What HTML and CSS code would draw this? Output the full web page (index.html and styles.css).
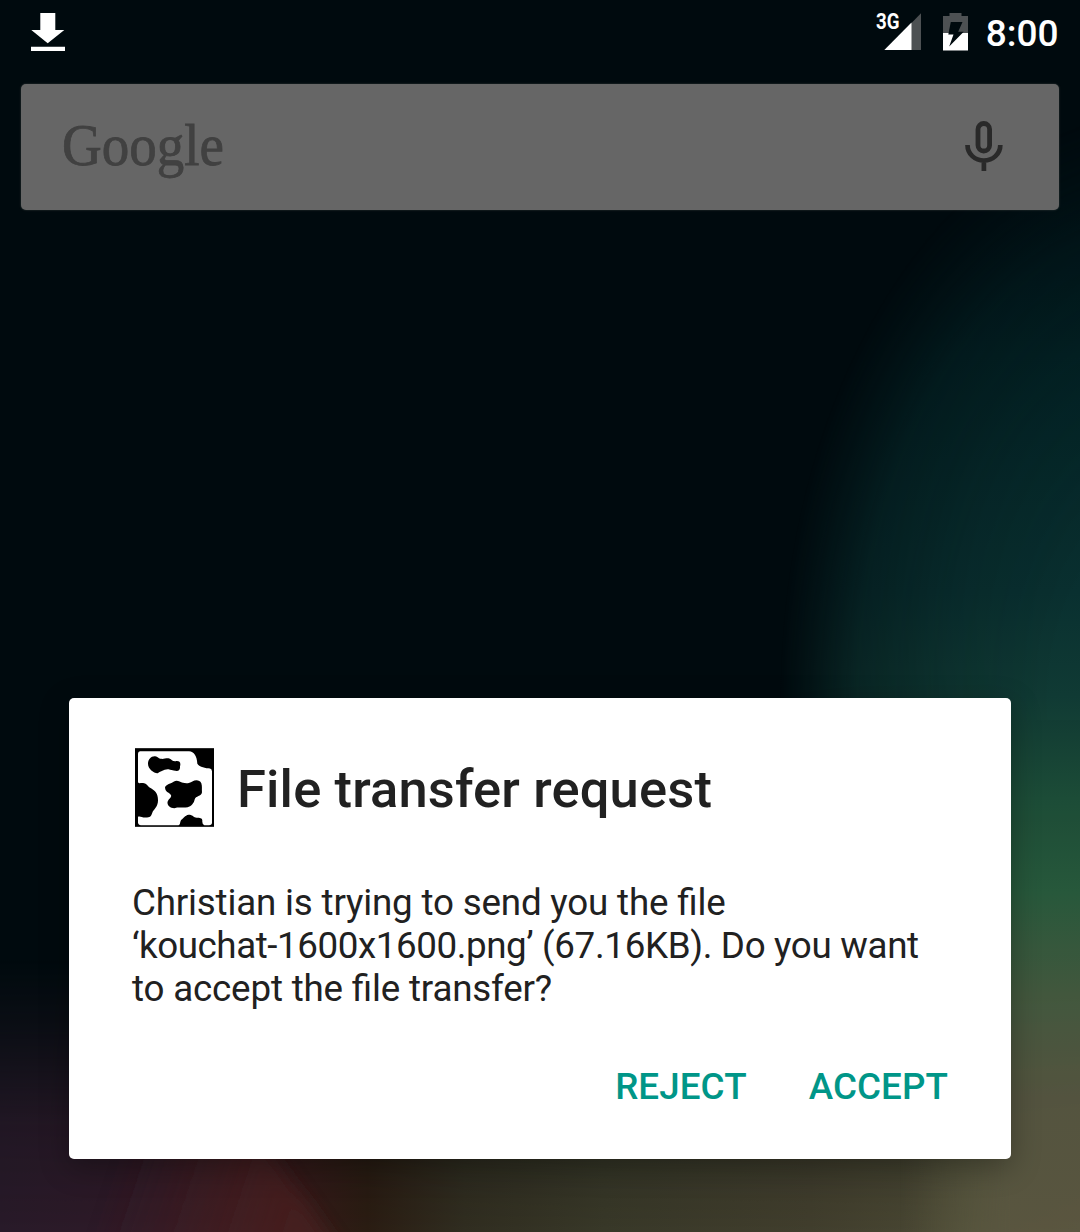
FILE: index.html
```html
<!DOCTYPE html>
<html lang="en">
<head>
<meta charset="utf-8">
<title>File transfer request</title>
<link rel="stylesheet" href="styles.css">
</head>
<body>
<main class="screen">
  <svg class="wallpaper" viewBox="0 0 1080 1232" aria-hidden="true">
    <defs>
      <linearGradient id="green" gradientUnits="userSpaceOnUse" x1="0" y1="200" x2="0" y2="1232">
        <stop offset="0" stop-color="#01181c"/>
        <stop offset=".15" stop-color="#032527"/>
        <stop offset=".38" stop-color="#093030"/>
        <stop offset=".48" stop-color="#103a34"/>
        <stop offset=".58" stop-color="#1d4f39"/>
        <stop offset=".67" stop-color="#295c3e"/>
        <stop offset=".77" stop-color="#455b40"/>
        <stop offset=".87" stop-color="#555540"/>
        <stop offset="1" stop-color="#5a5640"/>
      </linearGradient>
      <radialGradient id="edge" gradientUnits="userSpaceOnUse" cx="0" cy="0" r="1" gradientTransform="translate(1170 700) scale(390 590)">
        <stop offset="0" stop-color="#fff"/>
        <stop offset=".3" stop-color="#fff"/>
        <stop offset=".58" stop-color="#d4d4d4"/>
        <stop offset=".8" stop-color="#999"/>
        <stop offset=".93" stop-color="#333"/>
        <stop offset="1" stop-color="#000"/>
      </radialGradient>
      <linearGradient id="side" gradientUnits="userSpaceOnUse" x1="900" y1="0" x2="1010" y2="0">
        <stop offset="0" stop-color="#000"/>
        <stop offset="1" stop-color="#f4f4f4"/>
      </linearGradient>
      <mask id="edgeMask" maskUnits="userSpaceOnUse" x="0" y="0" width="1080" height="1232">
        <rect width="1080" height="720" fill="url(#edge)"/>
        <rect x="900" y="720" width="180" height="512" fill="url(#side)"/>
      </mask>
      <linearGradient id="floor" gradientUnits="userSpaceOnUse" x1="0" y1="0" x2="1080" y2="0">
        <stop offset="0" stop-color="#281a29"/>
        <stop offset=".15" stop-color="#301a27"/>
        <stop offset=".24" stop-color="#381b20"/>
        <stop offset=".28" stop-color="#351a19"/>
        <stop offset=".34" stop-color="#2a1c12"/>
        <stop offset=".43" stop-color="#302d20"/>
        <stop offset=".56" stop-color="#383828"/>
        <stop offset=".75" stop-color="#413e2d"/>
        <stop offset=".85" stop-color="#484632"/>
        <stop offset=".91" stop-color="#53543a"/>
        <stop offset="1" stop-color="#5b5741"/>
      </linearGradient>
      <linearGradient id="rise" x1="0" y1="0" x2="0" y2="1">
        <stop offset="0" stop-color="#000"/>
        <stop offset=".25" stop-color="#444"/>
        <stop offset=".6" stop-color="#ccc"/>
        <stop offset="1" stop-color="#fff"/>
      </linearGradient>
      <mask id="riseMask" maskUnits="userSpaceOnUse" x="0" y="960" width="1080" height="272">
        <rect y="960" width="1080" height="272" fill="url(#rise)"/>
      </mask>
      <linearGradient id="ember" gradientUnits="userSpaceOnUse" x1="110" y1="1180" x2="290" y2="1240">
        <stop offset="0" stop-color="#4c2020" stop-opacity="0"/>
        <stop offset="1" stop-color="#4c2020"/>
      </linearGradient>
      <filter id="soft" x="-30%" y="-30%" width="160%" height="160%"><feGaussianBlur stdDeviation="9"/></filter>
    </defs>
    <rect width="1080" height="1232" fill="#000a0e"/>
    <rect y="960" width="1080" height="272" fill="url(#floor)" mask="url(#riseMask)"/>
    <rect width="1080" height="1232" fill="url(#green)" mask="url(#edgeMask)"/>
    <path d="M80 1280 L80 1140 L262 1140 L360 1280 Z" fill="url(#ember)" opacity=".7" filter="url(#soft)"/>
  </svg>

  <header class="status">
    <svg class="download" viewBox="0 0 34 38"><path fill="#fff" d="M9.300 0h15v17h9L16.700 30.300.300 17h9zM0 33.700h34V38H0z"/></svg>
    <div class="tray">
      <svg class="signal" viewBox="0 0 45 38">
        <path fill="#4d5153" d="M35 10.500 45 .300V37H35z"/>
        <path fill="#fff" d="M8.300 37 35.500 9.600V37z"/>
        <text class="network" x="0" y="16.200" textLength="23.500" lengthAdjust="spacingAndGlyphs">3G</text>
      </svg>
      <svg class="battery" viewBox="0 0 25 38">
        <path fill="#4d5153" d="M6.500 0h12v3H25v17H0V3h6.500z"/>
        <path fill="#fff" d="M0 20h25v17.500H0z"/>
        <path fill="#000a0e" d="M7.800 9h11.700l-4.300 9.800h5.500L6.200 33.500 10.500 21.500H5.300z"/>
      </svg>
      <time class="clock">8:00</time>
    </div>
  </header>

  <div class="search">
    <svg class="brand" viewBox="0 0 166 70"><text class="brand-text" x="0" y="43.500" textLength="162" lengthAdjust="spacingAndGlyphs">Google</text></svg>
    <svg class="mic" viewBox="0 0 38 51" fill="none" stroke="#292929">
      <rect x="13" y="2.500" width="11.600" height="27.500" rx="5.800" stroke-width="4.800"/>
      <path d="M2.500 24c0 9 7.400 15.500 16.400 15.500S35.300 33 35.300 24M18.900 39v11" stroke-width="4.700"/>
    </svg>
  </div>

  <section class="dialog" role="dialog">
    <div class="heading">
      <svg class="cow" viewBox="43 37 237 236">
        <rect x="43" y="37" width="237" height="236" fill="#000"/>
        <path fill="#fff" d="M58 46H205C220 47 229 60 230 84C237 94 255 98 268 98Q274 99 274 107V260Q274 268 265 268H251Q244 265 245 255C245 246 237 247 228 246C219 245 216 237 204 237C192 239 189 248 182 252C177 258 180 268 173 268H61Q53 268 52 260V243C58 239 63 246 77 245C91 246 93 237 96 228C101 219 112 212 112 193C112 171 103 165 91 157C83 154 80 144 70 142C61 140 52 146 52 138V54Q52 47 58 46Z"/>
        <path d="M82 84C82 70 93 59 106 62C114 64 114 69 121 69C131 70 137 66 146 68C154 71 154 77 165 76C178 74 181 82 178 91C179 104 173 108 159 104C145 101 142 98 132 102C125 106 119 106 111 112C101 113 82 101 82 84ZM133 155C136 144 151 145 160 137C170 131 177 139 187 141C198 144 207 142 215 137C226 131 237 133 242 142C245 151 243 159 244 169C242 182 225 179 222 191C220 202 211 212 201 214C188 217 175 213 161 217C147 217 138 207 141 197C144 188 154 184 151 178C147 169 134 171 133 155Z"/>
      </svg>
      <h1 class="title">File transfer request</h1>
    </div>
    <p class="message">Christian is trying to send you the file<br><span class="file-line"><span class="file-name">‘kouchat-1600x1600.png’</span> (67.16KB). Do you want</span><br>to accept the file transfer?</p>
    <div class="actions">
      <button class="action">REJECT</button>
      <button class="action">ACCEPT</button>
    </div>
  </section>
</main>
</body>
</html>
```
FILE: styles.css
```css
* { box-sizing: border-box; }

body {
  margin: 0;
  font-family: Roboto, "Liberation Sans", sans-serif;
  background: #000a0e;
}

.screen {
  position: relative;
  display: flex;
  flex-direction: column;
  width: 1080px;
  height: 1232px;
  overflow: hidden;
}

.wallpaper {
  position: absolute;
  inset: 0;
  width: 1080px;
  height: 1232px;
}

.status, .search, .dialog { position: relative; flex: none; }

.status {
  display: flex;
  justify-content: space-between;
  align-items: flex-start;
  height: 84px;
  padding: 12.6px 21.5px 0 30.5px;
}

.download { width: 34px; height: 38px; }
.tray { display: flex; align-items: flex-start; }
.signal { width: 45px; height: 38px; margin-right: 22px; overflow: visible; }
.network { font: 700 21.5px "Roboto", sans-serif; fill: #fff; }
.battery { width: 25px; height: 38px; margin-right: 18px; }

.clock {
  font-size: 37px;
  font-weight: 500;
  line-height: 41px;
  color: #fff;
}

.search {
  display: flex;
  justify-content: space-between;
  align-items: flex-start;
  width: 1038px;
  height: 126px;
  margin-left: 21px;
  padding: 37px 56px 0 41px;
  border-radius: 5px;
  background: #666;
  box-shadow: 0 0 2px #39403f;
}

.brand { width: 166px; height: 70px; overflow: visible; }
.brand-text { font: 59px "Liberation Serif", serif; fill: #414141; stroke: #414141; stroke-width: .8px; }
.mic { width: 38px; height: 51px; }

.dialog {
  display: flex;
  flex-direction: column;
  width: 942px;
  height: 461px;
  margin: 488px 0 0 69px;
  padding: 49px 63px 0 63px;
  border-radius: 5px;
  background: #fff;
  color: #212121;
  box-shadow: 0 8px 30px rgba(0, 0, 0, .3);
}

.heading { display: flex; align-items: center; gap: 23.5px; height: 80px; padding-left: 2.5px; }
.cow { flex: none; width: 79px; height: 79px; }
.title { margin: 3px 0 0; font-size: 52.5px; font-weight: 500; line-height: 62px; letter-spacing: .15px; white-space: nowrap; }

.message {
  margin: 54px 0 0;
  font-size: 36.75px;
  line-height: 43px;
  letter-spacing: -.18px;
  font-feature-settings: "liga" 1;
  white-space: nowrap;
}

.file-line { letter-spacing: -.33px; }
.file-name { letter-spacing: -.42px; }
.actions { display: flex; justify-content: flex-end; gap: 62px; margin-top: 54.5px; }

.action {
  padding: 0;
  border: 0;
  background: none;
  font: 500 36.75px/43px Roboto, sans-serif;
  letter-spacing: .1px;
  color: #009688;
}
```
